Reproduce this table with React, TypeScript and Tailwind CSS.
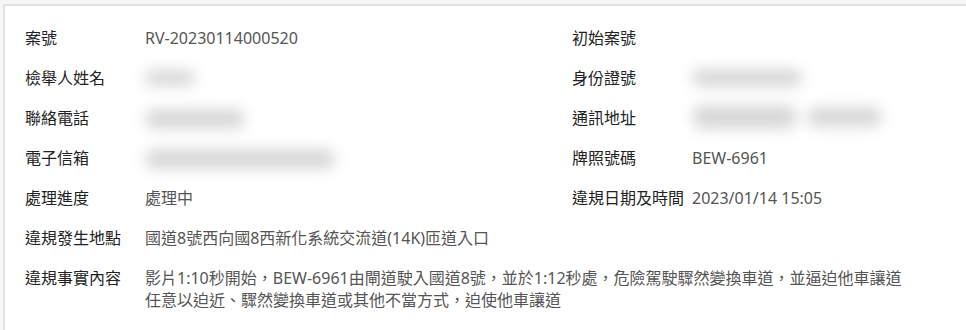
import type { ReactNode } from 'react'

const font = { fontFamily: '"Noto Sans", "Noto Sans CJK TC", sans-serif' }

function Blur({ className }: { className: string }) {
  return <div className={'rounded-full bg-[#d8d8d8] blur-[7px] ' + className} />
}

function Field({ label, children, wide = false }: { label: string; children?: ReactNode; wide?: boolean }) {
  return (
    <div className={'flex items-start ' + (wide ? 'col-span-2' : '')}>
      <div className="w-[120px] shrink-0 text-[#222]">{label}</div>
      <div className="flex-1 min-w-0 text-[#555]">{children}</div>
    </div>
  )
}

export default function App() {
  return (
    <div className="w-[966px] h-[330px] bg-[#f6f6f6] pt-[4px] pl-[3px] overflow-hidden" style={font}>
      <div className="h-full bg-white border-t-2 border-l-2 border-[#e2e2e2] pl-[20px] pt-[21px] text-[16px] leading-[22px]">
        <div className="grid grid-cols-[547px_1fr] gap-y-[18px]">
          <Field label="案號">RV-20230114000520</Field>
          <Field label="初始案號" />

          <Field label="檢舉人姓名"><Blur className="w-[50px] h-[16px] mt-[3px]" /></Field>
          <Field label="身份證號"><Blur className="w-[110px] h-[18px] mt-[2px]" /></Field>

          <Field label="聯絡電話"><Blur className="w-[100px] h-[20px] mt-[2px]" /></Field>
          <Field label="通訊地址">
            <div className="flex gap-[10px] -mt-[2px]">
              <Blur className="w-[105px] h-[24px]" />
              <Blur className="w-[75px] h-[20px] mt-[2px]" />
            </div>
          </Field>

          <Field label="電子信箱"><Blur className="w-[190px] h-[20px] mt-[2px]" /></Field>
          <Field label="牌照號碼">BEW-6961</Field>

          <Field label="處理進度">處理中</Field>
          <Field label="違規日期及時間">2023/01/14 15:05</Field>

          <Field label="違規發生地點" wide>國道8號西向國8西新化系統交流道(14K)匝道入口</Field>

          <Field label="違規事實內容" wide>
            影片1:10秒開始，BEW-6961由閘道駛入國道8號，並於1:12秒處，危險駕駛驟然變換車道，並逼迫他車讓道
            <br />
            任意以迫近、驟然變換車道或其他不當方式，迫使他車讓道
          </Field>
        </div>
      </div>
    </div>
  )
}
